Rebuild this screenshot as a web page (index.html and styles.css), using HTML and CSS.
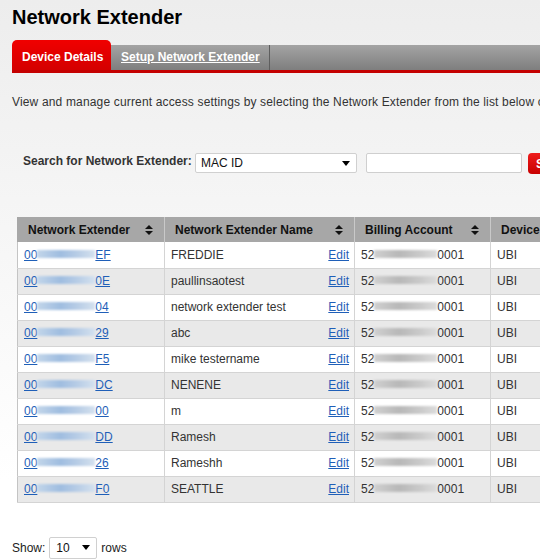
FILE: index.html
```html
<html><head>
    <title>Network Extender</title>
    <meta charset="UTF-8">
    <meta name="viewport" content="width=device-width, initial-scale=1">
    <link rel="stylesheet" href="styles.css">
</head>
<body><div class="page">
  <h1>Network Extender</h1>
  <div class="tabs">
    <span class="tab active">Device Details</span>
    <a class="tab" href="#">Setup Network Extender</a>
    <span class="tab-fill"></span>
  </div>
  <p class="intro">View and manage current access settings by selecting the Network Extender from the list below or by searching.</p>
  <div class="search">
    <label for="searchBy">Search for Network Extender:</label>
    <div class="select wide" id="searchBy">MAC ID<span class="arrow"></span></div>
    <input class="field" type="text" value="">
    <button class="btn" type="button">Search</button>
  </div>
  <table class="grid">
    <thead><tr>
      <th class="c1">Network Extender<span class="sort"></span></th>
      <th class="c2">Network Extender Name<span class="sort"></span></th>
      <th class="c3">Billing Account<span class="sort"></span></th>
      <th class="c4">Device Type<span class="sort"></span></th>
    </tr></thead>
    <tbody>
      <tr><td><a href="#">00<span class="mask"></span>EF</a></td><td><div class="name">FREDDIE<a href="#">Edit</a></div></td><td>52<span class="mask gray"></span>0001</td><td>UBI</td></tr>
      <tr><td><a href="#">00<span class="mask"></span>0E</a></td><td><div class="name">paullinsaotest<a href="#">Edit</a></div></td><td>52<span class="mask gray"></span>0001</td><td>UBI</td></tr>
      <tr><td><a href="#">00<span class="mask"></span>04</a></td><td><div class="name">network extender test<a href="#">Edit</a></div></td><td>52<span class="mask gray"></span>0001</td><td>UBI</td></tr>
      <tr><td><a href="#">00<span class="mask"></span>29</a></td><td><div class="name">abc<a href="#">Edit</a></div></td><td>52<span class="mask gray"></span>0001</td><td>UBI</td></tr>
      <tr><td><a href="#">00<span class="mask"></span>F5</a></td><td><div class="name">mike testername<a href="#">Edit</a></div></td><td>52<span class="mask gray"></span>0001</td><td>UBI</td></tr>
      <tr><td><a href="#">00<span class="mask"></span>DC</a></td><td><div class="name">NENENE<a href="#">Edit</a></div></td><td>52<span class="mask gray"></span>0001</td><td>UBI</td></tr>
      <tr><td><a href="#">00<span class="mask"></span>00</a></td><td><div class="name">m<a href="#">Edit</a></div></td><td>52<span class="mask gray"></span>0001</td><td>UBI</td></tr>
      <tr><td><a href="#">00<span class="mask"></span>DD</a></td><td><div class="name">Ramesh<a href="#">Edit</a></div></td><td>52<span class="mask gray"></span>0001</td><td>UBI</td></tr>
      <tr><td><a href="#">00<span class="mask"></span>26</a></td><td><div class="name">Rameshh<a href="#">Edit</a></div></td><td>52<span class="mask gray"></span>0001</td><td>UBI</td></tr>
      <tr><td><a href="#">00<span class="mask"></span>F0</a></td><td><div class="name">SEATTLE<a href="#">Edit</a></div></td><td>52<span class="mask gray"></span>0001</td><td>UBI</td></tr>
    </tbody>
  </table>
  <div class="pager">
    <span>Show:</span>
    <div class="select small">10<span class="arrow"></span></div>
    <span>rows</span>
  </div>
</div></body></html>
```

FILE: styles.css
```css
html,
body {
  margin: 0;
  padding: 0;
  overflow: hidden;
}
body {
  font-family: "Liberation Sans", Arial, sans-serif;
  font-size: 12px;
  color: #333;
  background: linear-gradient(#ededed, #f5f5f5 200px, #fff 480px);
}
.page {
  width: 540px;
  height: 560px;
  overflow: hidden;
}
h1 {
  margin: 0;
  padding: 5px 12px 0;
  font-size: 20px;
  line-height: 24px;
  color: #000;
}
.tabs {
  display: flex;
  align-items: flex-end;
  margin: 11px 0 0 12px;
  border-bottom: 3px solid #c40000;
}
.tab {
  display: block;
  flex: none;
  height: 25px;
  line-height: 25px;
  padding: 0 9px 0 10px;
  font-weight: bold;
  color: #fff;
  white-space: nowrap;
  background: linear-gradient(#a4a4a4, #7e7e7e);
  border-right: 1px solid #5e5e5e;
}
.tab.active {
  height: 30px;
  line-height: 34px;
  width: 80px;
  border-right: 0;
  border-radius: 5px 5px 0 0;
  background: linear-gradient(#f00000, #d40000);
}
a.tab {
  text-decoration: underline;
}
.tab-fill {
  flex: 1;
  height: 25px;
  background: linear-gradient(#a4a4a4, #7e7e7e);
}
.intro {
  margin: 22px 0 0 12px;
  white-space: nowrap;
  line-height: 14px;
  letter-spacing: 0.16px;
}
.search {
  display: flex;
  align-items: flex-start;
  margin: 44px 0 0 23px;
  white-space: nowrap;
}
.search > * {
  flex: none;
}
.search label {
  font-weight: bold;
  line-height: 14px;
  margin-top: 1px;
  width: 172px;
}
.select {
  position: relative;
  box-sizing: border-box;
  height: 20px;
  line-height: 18px;
  padding-left: 5px;
  background: #fff;
  border: 1px solid #d0d0d0;
  border-radius: 2px;
  color: #111;
}
.select.wide {
  width: 162px;
}
.select.small {
  width: 48px;
  height: 22px;
  line-height: 20px;
  padding-left: 6px;
}
.arrow {
  position: absolute;
  right: 6px;
  top: 7px;
  border-left: 4px solid transparent;
  border-right: 4px solid transparent;
  border-top: 5px solid #000;
}
.field {
  box-sizing: border-box;
  width: 156px;
  height: 20px;
  margin: 0 0 0 9px;
  border: 1px solid #cfcfcf;
  border-radius: 2px;
  background: #fff;
}
.btn {
  height: 21px;
  margin-left: 6px;
  padding: 0 8px;
  border: 0;
  border-radius: 4px;
  background: linear-gradient(#ee1c1c, #c80000);
  color: #fff;
  font: bold 12px "Liberation Sans", Arial, sans-serif;
}
.grid {
  margin: 43px 0 0 17px;
  border-collapse: collapse;
  table-layout: fixed;
  width: 600px;
  font-size: 12px;
}
.grid th {
  position: relative;
  box-sizing: border-box;
  height: 25px;
  padding: 0 10px;
  text-align: left;
  font-weight: bold;
  color: #111;
  background: #a7a7a7;
  border-left: 1px solid #c9c9c9;
  white-space: nowrap;
}
.c1 { width: 147px; }
.c2 { width: 190px; }
.c3 { width: 136px; }
.c4 { width: 127px; }
.grid th.c1 { border-left: 1px solid #a7a7a7; }
.sort {
  position: absolute;
  right: 11px;
  top: 8px;
  width: 8px;
  height: 10px;
}
.sort::before,
.sort::after {
  content: "";
  position: absolute;
  left: 0;
  border-left: 4px solid transparent;
  border-right: 4px solid transparent;
}
.sort::before {
  top: 0;
  border-bottom: 4px solid #111;
}
.sort::after {
  top: 6px;
  border-top: 4px solid #111;
}
.grid td {
  height: 26px;
  padding: 0 5px 0 6px;
  border-left: 1px solid #d4d4d4;
  border-bottom: 1px solid #d4d4d4;
  white-space: nowrap;
  color: #333;
}
.grid td:first-child {
  border-left: 1px solid #c4c4c4;
}
.grid tbody tr:nth-child(even) td {
  background: #e9e9e9;
}
.grid tbody tr:nth-child(odd) td {
  background: #fff;
}
.grid a {
  color: #1f5fb8;
}
.name {
  display: flex;
  justify-content: space-between;
}
.mask {
  display: inline-block;
  width: 58px;
  height: 8px;
  vertical-align: 1px;
  background: linear-gradient(90deg, #c3d6ea, #9fbde0 40%, #b8cde6 70%, #d4e1ef);
  filter: blur(1px);
}
.mask.gray {
  width: 63px;
  background: linear-gradient(90deg, #d0d0d0, #b8b8b8 40%, #c8c8c8 70%, #dcdcdc);
}
.pager {
  display: flex;
  align-items: center;
  gap: 4px;
  margin: 34px 0 0 12px;
  color: #222;
}
```
